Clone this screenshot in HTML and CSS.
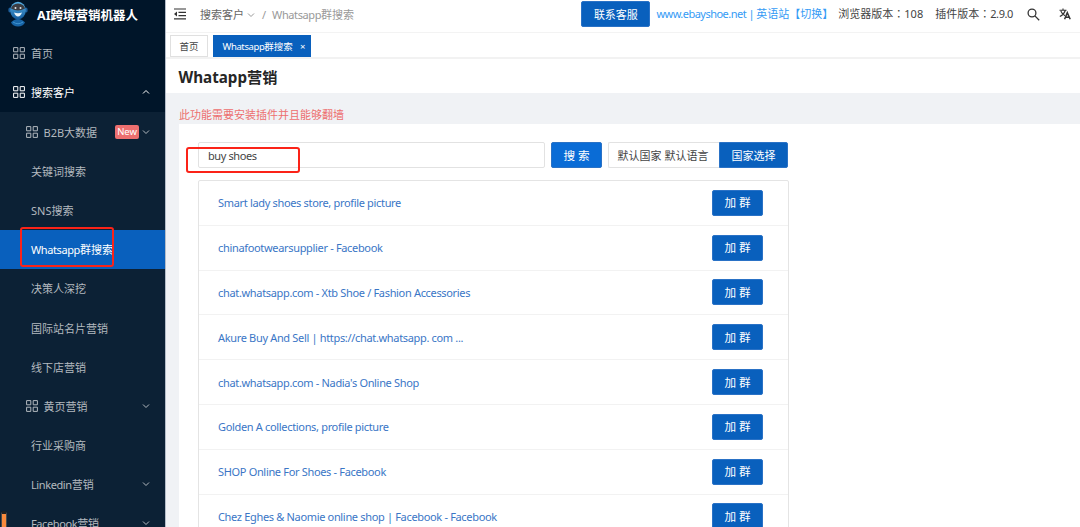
FILE: index.html
```html
<!DOCTYPE html>
<html lang="zh-CN">
	<head>
		<meta charset="utf-8" />
		<meta name="viewport" content="width=device-width, initial-scale=1" />
		<title>AI跨境营销机器人</title>
		<link rel="stylesheet" href="styles.css">
	</head>
	<body>
		<svg width="0" height="0" class="defs">
			<symbol id="grid" viewBox="0 0 12 12"><path d="M.6 .6h4.2v4.2H.6zM7.2 .6h4.2v4.2H7.2zM.6 7.2h4.2v4.2H.6zM7.2 7.2h4.2v4.2H7.2z" /></symbol>
			<symbol id="down" viewBox="0 0 8 8"><path d="M1 2.5l3 3 3-3" /></symbol>
			<symbol id="up" viewBox="0 0 8 8"><path d="M1 5.5l3-3 3 3" /></symbol>
		</svg>
		<div id="page">
			<aside id="sidebar">
				<div class="logo">
					<svg width="20" height="26" viewBox="0 0 20 26">
						<defs>
							<linearGradient id="skin" x1="0" y1="0" x2="0" y2="1"><stop offset="0" stop-color="#59b4e8" /><stop offset="1" stop-color="#125a9c" /></linearGradient>
						</defs>
						<path d="M3 21.500Q6 18 10 18Q14 18 17 21.500Q15 25.500 10 25.500Q5 25.500 3 21.500z" fill="#1764a6" />
						<path d="M5 21Q10 24.500 15 21" fill="none" stroke="#3f93cf" />
						<ellipse cx="1.900" cy="9" rx="1.600" ry="2.500" fill="#1d5f9c" />
						<ellipse cx="18.100" cy="9" rx="1.600" ry="2.500" fill="#1d5f9c" />
						<ellipse cx="10" cy="9.500" rx="7.800" ry="8.800" fill="url(#skin)" />
						<path d="M3 7.500Q4 2.600 10 2.400Q16 2.600 17 7.500Q10 11.500 3 7.500z" fill="#3d3d42" />
						<circle cx="7.500" cy="7" r="1" fill="#dfe6ea" />
						<circle cx="12.500" cy="7" r="1" fill="#dfe6ea" />
						<path d="M6 11.500Q10 13 14 11.500Q12.500 15.500 10 15.500Q7.500 15.500 6 11.500z" fill="#eaf5fb" />
					</svg>
					<span>AI跨境营销机器人</span>
				</div>
				<ul class="menu">
					<li><svg class="icon"><use href="#grid" /></svg><span>首页</span></li>
					<li class="open"><svg class="icon"><use href="#grid" /></svg><span>搜索客户</span><svg class="arrow"><use href="#up" /></svg></li>
				</ul>
				<ul class="menu sub">
					<li class="group"><svg class="icon"><use href="#grid" /></svg><span>B2B大数据</span><em class="new">New</em><svg class="arrow"><use href="#down" /></svg></li>
					<li><span>关键词搜索</span></li>
					<li><span>SNS搜索</span></li>
					<li class="active"><span><span class="en">Whatsapp</span>群搜索</span></li>
					<li><span>决策人深挖</span></li>
					<li><span>国际站名片营销</span></li>
					<li><span>线下店营销</span></li>
					<li class="group"><svg class="icon"><use href="#grid" /></svg><span>黄页营销</span><svg class="arrow"><use href="#down" /></svg></li>
					<li><span>行业采购商</span></li>
					<li><span><span class="en">Linkedin</span>营销</span><svg class="arrow"><use href="#down" /></svg></li>
					<li><span><span class="en">Facebook</span>营销</span><svg class="arrow"><use href="#down" /></svg></li>
				</ul>
				<div class="mark mark-menu"></div>
				<div class="handle"></div>
			</aside>
			<main id="main">
				<header class="topbar">
					<svg class="fold" width="12" height="12" viewBox="0 0 12 12"><path d="M0 1h12M4.500 4.300h7.500M4.500 7.600h7.500M0 10.900h12" stroke="#333" stroke-width="1.200" /><path d="M3 3.600v4.800L0 6z" fill="#333" /></svg>
					<div class="crumbs">
						<span>搜索客户</span>
						<svg class="arrow"><use href="#down" /></svg>
						<i>/</i>
						<span class="current"><span class="en">Whatsapp</span>群搜索</span>
					</div>
					<div class="tools">
						<button class="btn service">联系客服</button>
						<a class="site"><span class="url">www.ebayshoe.net | </span>英语站【切换】</a>
						<span class="version">浏览器版本<span class="colon" lang="zh-TW">：</span>108</span>
						<span class="version plugin">插件版本<span class="colon" lang="zh-TW">：</span><span class="en">2.9.0</span></span>
						<svg class="search" width="13" height="13" viewBox="0 0 13 13"><circle cx="5" cy="5" r="3.900" /><path d="M7.900 7.900l4.300 4.300" /></svg>
						<svg class="lang" width="12" height="12" viewBox="0 0 12 12"><path d="M.5 2.300h7M4 .6v1.700M6.300 2.500Q5 6.500 .8 8.500M1.800 3Q3 6 6 7.800" /><path d="M5.600 11.300L8.300 4.600l2.900 6.700M6.600 9.200h3.600" stroke-width="1.500" /></svg>
					</div>
				</header>
				<nav class="tabs">
					<a class="tab">首页</a>
					<a class="tab on"><span class="en">Whatsapp</span>群搜索<b>×</b></a>
				</nav>
				<h1>Whatapp营销</h1>
				<div id="content">
					<p class="notice">此功能需要安装插件并且能够翻墙</p>
					<section class="card">
						<div class="form">
							<div class="field">buy shoes</div>
							<button class="btn go">搜 索</button>
							<div class="country"><span>默认国家 默认语言</span><button class="btn">国家选择</button></div>
							<div class="mark mark-field"></div>
						</div>
						<ul class="list">
							<li><a>Smart lady shoes store, profile picture</a><button class="btn">加 群</button></li>
							<li><a>chinafootwearsupplier - Facebook</a><button class="btn">加 群</button></li>
							<li><a>chat.whatsapp.com - Xtb Shoe / Fashion Accessories</a><button class="btn">加 群</button></li>
							<li><a>Akure Buy And Sell | https://chat.whatsapp. com ...</a><button class="btn">加 群</button></li>
							<li><a>chat.whatsapp.com - Nadia's Online Shop</a><button class="btn">加 群</button></li>
							<li><a>Golden A collections, profile picture</a><button class="btn">加 群</button></li>
							<li><a>SHOP Online For Shoes - Facebook</a><button class="btn">加 群</button></li>
							<li><a>Chez Eghes &amp; Naomie online shop | Facebook - Facebook</a><button class="btn">加 群</button></li>
						</ul>
					</section>
				</div>
			</main>
		</div>
	</body>
</html>
```
FILE: styles.css
```css
* { box-sizing: border-box; }
body {
	margin: 0; padding: 0;
	overflow: hidden;
	background: #fff;
	color: #444;
	font: 11px/16px "Noto Sans", "Noto Sans CJK SC", sans-serif;
}
ul, p, h1 { margin: 0; padding: 0; list-style: none; }
span, a { white-space: nowrap; }
.defs { position: absolute; }
.en { letter-spacing: -.4px; }
.colon { font-family: "Noto Sans CJK TC", sans-serif; line-height: 1; }
.icon { width: 12px; height: 12px; fill: none; stroke: currentColor; stroke-width: 1; }
.arrow { width: 8px; height: 8px; fill: none; stroke: currentColor; stroke-width: 1; }
.btn {
	height: 26px; padding: 1px 0 0;
	border: 1px solid #2a72c6; border-radius: 2px;
	background: #0960bd;
	color: #fff;
	font: inherit;
	white-space: nowrap;
}
#page {
	display: flex;
	height: 527px;
	overflow: hidden;
}

/* sidebar */
#sidebar {
	position: relative;
	flex: none;
	width: 165px;
	overflow: hidden;
	background: #001529;
}
.logo {
	display: flex;
	align-items: center;
	height: 33.6px; padding: 0 0 6px 8px;
	color: #fff;
	font-size: 12.5px; font-weight: 700;
}
.logo svg { flex: none; margin-right: 9px; }
.logo span { padding-top: 4px; }
.menu li {
	display: flex;
	align-items: center;
	height: 39.2px; padding: 0 15px 0 13px;
	color: #b3b9bf;
}
.menu li > span { padding-top: 2px; }
.menu .icon { margin-right: 6px; }
.menu .arrow { margin-left: auto; }
.menu .open { color: #fff; }
.sub { background: #0c2135; }
.menu.sub li { padding-left: 31px; }
.menu.sub .group { padding-left: 25.5px; }
.menu.sub .active { background: #0960bd; color: #fff; }
.menu .new {
	margin-left: auto; padding: 0 2px;
	border-radius: 2px;
	background: #ed6f6f;
	color: #fff;
	font-size: 9.5px; font-style: normal; line-height: 14px;
}
.menu .new + .arrow { margin-left: 3px; }
.mark {
	position: absolute;
	border: 2px solid #fb2318; border-radius: 3px;
}
.mark-menu { left: 20px; top: 227px; width: 94px; height: 40px; }
.handle {
	position: absolute;
	left: 1px; top: 511px; width: 6px; height: 20px;
	border: 1px solid #4a4a4a; border-top: 3px solid #222; border-radius: 3px 3px 0 0;
	background: #f98a3c;
}

/* header */
#main {
	flex: 1;
	min-width: 0;
	border-left: 1px solid #b5bdc9;
}
.topbar {
	display: flex;
	align-items: center;
	height: 33px; padding: 0 9px 4px 8px;
	border-bottom: 1px solid #f3f3f3;
}
.crumbs {
	display: flex;
	align-items: center;
	margin-left: 14px; padding-top: 1px;
	color: #666;
}
.crumbs .arrow { margin-left: 3px; color: #999; }
.crumbs i { margin: 0 6px 0 7px; color: #999; font-style: normal; }
.current { color: #999; }
.tools {
	display: flex;
	align-items: center;
	margin-left: auto;
}
.service { width: 69px; }
.site { margin-left: 6px; color: #349bf5; }
.url { letter-spacing: -.52px; }
.version { margin-left: 5px; }
.plugin { margin-left: 12px; }
.search { margin-left: 14px; fill: none; stroke: #333; stroke-width: 1.3; }
.lang { margin-left: 19px; fill: none; stroke: #333; stroke-width: 1.1; }
.tabs {
	display: flex;
	gap: 5px;
	height: 26px; padding: 2px 0 0 4px;
	border-bottom: 2px solid #f2f2f2;
}
.tab {
	height: 22px; padding: 0 8.5px;
	border: 1px solid #e0e0e0;
	font-size: 9.5px; line-height: 21px;
}
.tab.on { padding-right: 5px; border-color: #0960bd; background: #0960bd; color: #fff; }
.tab b { margin-left: 7px; font-weight: 400; }
h1 {
	height: 34px; padding-left: 12.5px;
	color: #262626;
	font-size: 15.2px; font-weight: 700; line-height: 36px;
}

/* content */
#content {
	padding: 13px 0 0 13px;
	background: #f0f2f5;
}
.notice { height: 18px; color: #ed6f6f; line-height: 18px; }
.card {
	height: 420px; padding: 18px 0 0 19px;
	background: #fff;
}
.form {
	position: relative;
	display: flex;
	width: 590px; height: 26px;
}
.field {
	width: 348px; height: 26px; padding-left: 9px;
	border: 1px solid #e2e2e2; border-radius: 2px;
	letter-spacing: -.4px; line-height: 25px;
}
.go { width: 51px; margin: 0 6px 0 6px; background: #0a6cd6; font-size: 11.6px; }
.country { display: flex; width: 180px; }
.country span {
	width: 111px; height: 26px; padding-right: 2px;
	border: 1px solid #e2e2e2; border-right: 0; border-radius: 2px 0 0 2px;
	line-height: 25px; text-align: center;
}
.country .btn { width: 69px; border-radius: 0 2px 2px 0; }
.mark-field { left: -12px; top: 5px; width: 114px; height: 26px; }
.list {
	width: 591px; margin-top: 12px;
	border: 1px solid #e4e4e4; border-radius: 2px;
}
.list li {
	display: flex;
	align-items: center;
	justify-content: space-between;
	height: 44.8px; padding: 0 25px 0 19px;
	border-bottom: 1px solid #f2f2f2;
}
.list a { padding-top: 1px; color: #3a76c6; letter-spacing: -.33px; }
.list .btn { width: 51px; font-size: 11.6px; }
```
